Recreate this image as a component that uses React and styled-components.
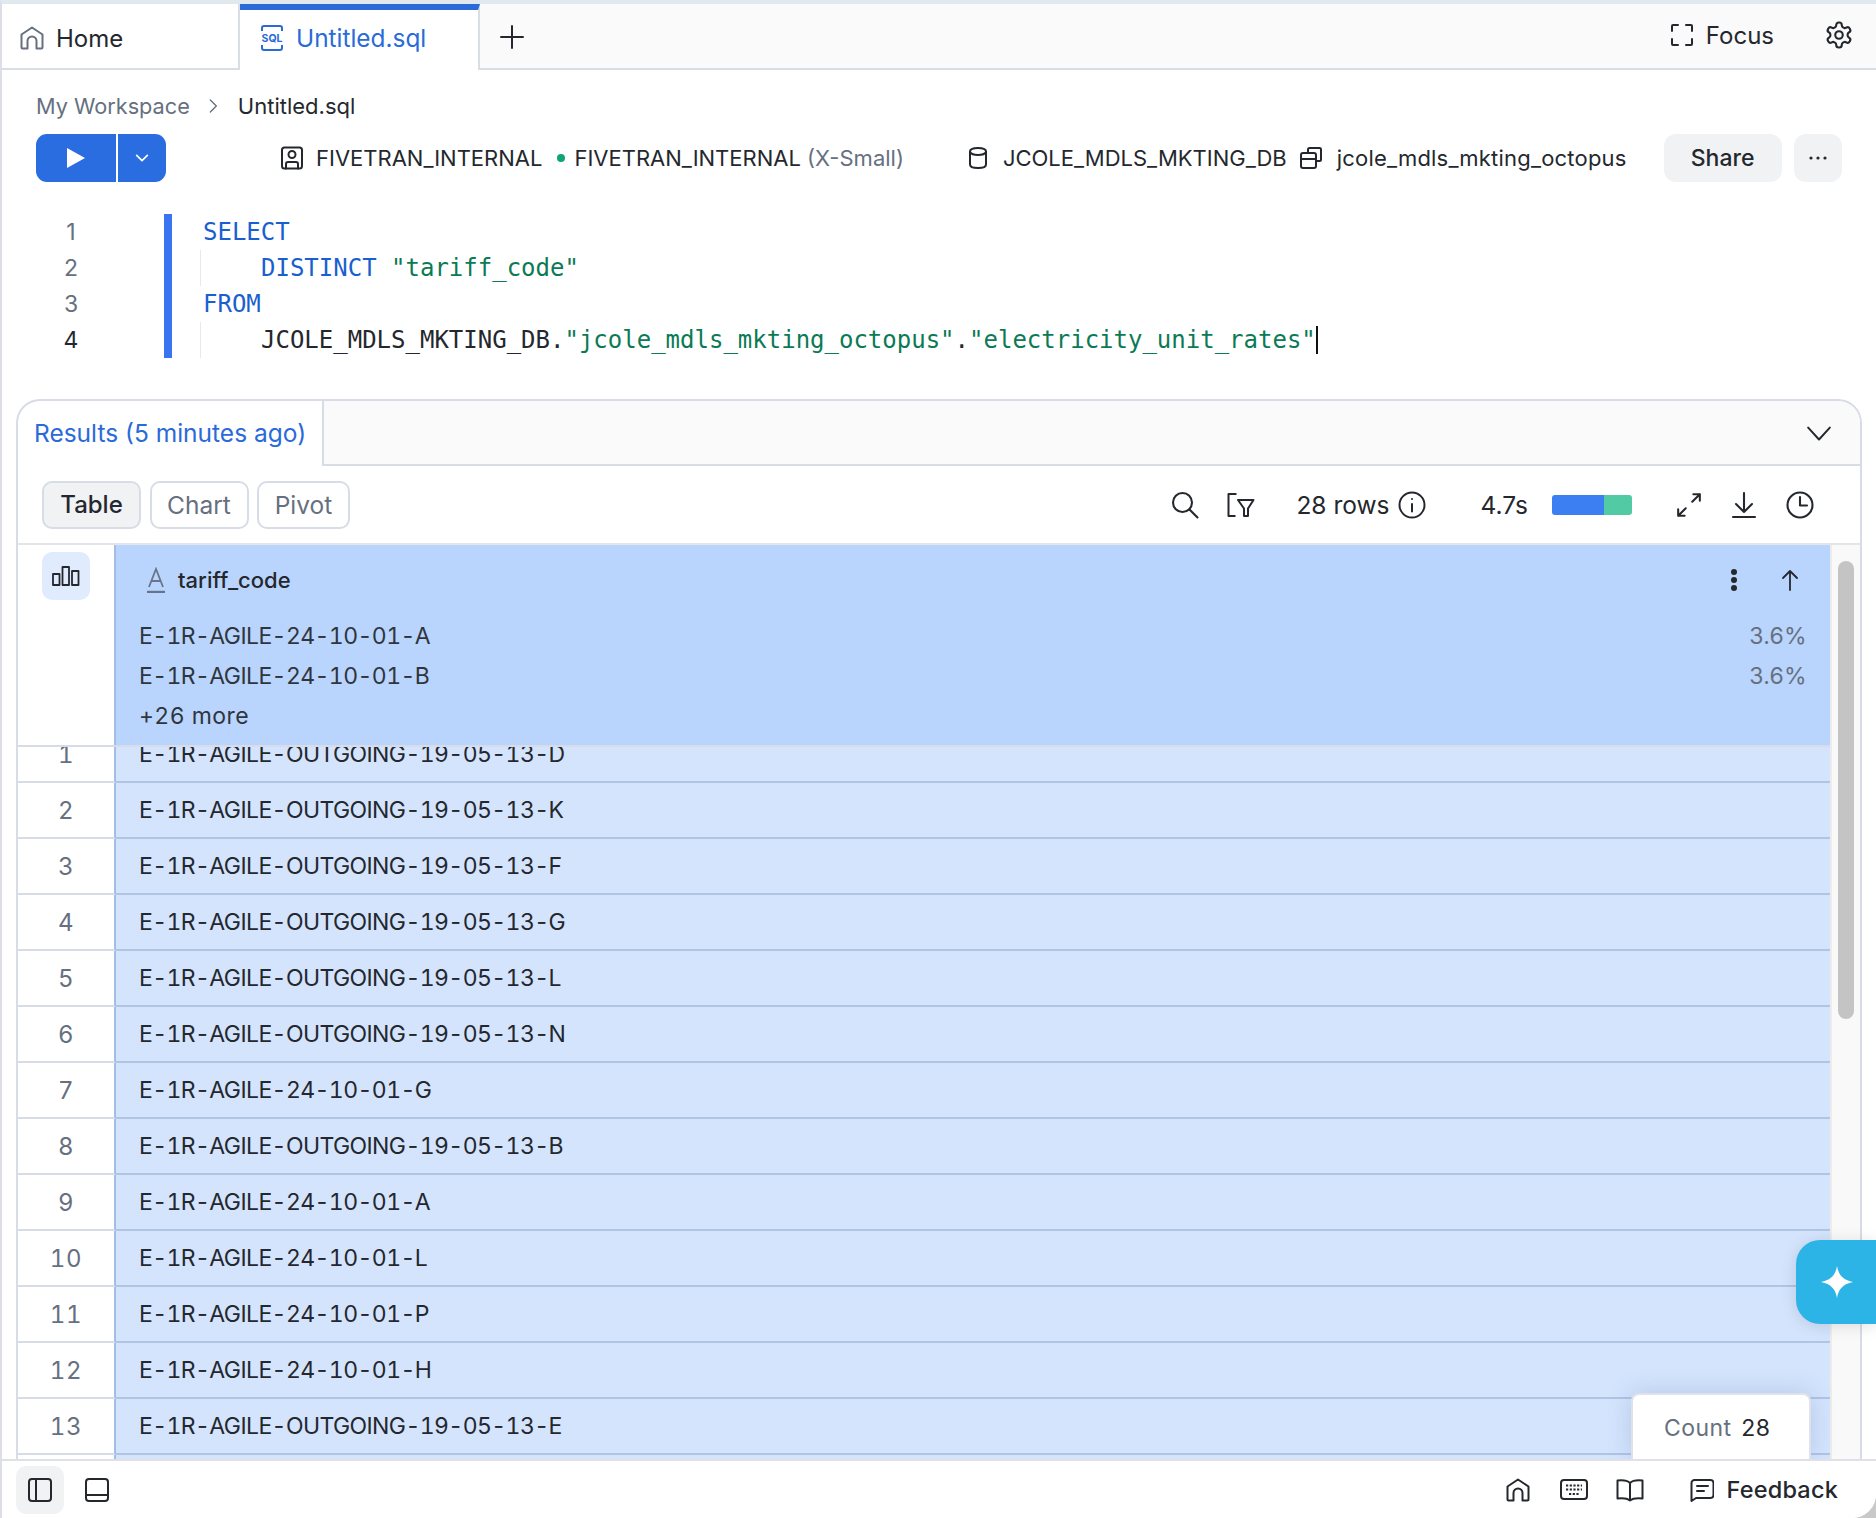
import React from "react";
import styled, { createGlobalStyle } from "styled-components";

const Global = createGlobalStyle`
  html, body { margin: 0; padding: 0; background: #c9c9c9; }
  body { font-family: Inter, "Liberation Sans", sans-serif; color: #24282e; }
  * { box-sizing: border-box; }
`;
const Frame = styled.div`
  position: relative; width: 1876px; height: 1518px; overflow: hidden; display: flex; flex-direction: column;
  background: #fff; border-top: 4px solid #e1e9ef; border-left: 2px solid #dcdfe5; border-bottom-right-radius: 24px;
`;
const TabBar = styled.div`
  display: flex; height: 66px; flex: none; background: #fafafa; border-bottom: 2px solid #d8dee6; align-items: stretch;
`;
const Tab = styled.div`
  display: flex; align-items: center; gap: 12px; height: ${p => (p.$active ? "66px" : "64px")}; background: #fff;
  width: ${p => (p.$active ? "240px" : "238px")}; font-size: ${p => (p.$active ? "24.4px" : "24px")}; padding-left: ${p => (p.$active ? "20px" : "18px")};
  padding-top: ${p => (p.$active ? "0" : "4px")}; padding-bottom: ${p => (p.$active ? "4px" : "0")};
  color: ${p => (p.$active ? "#2a6ad9" : "#24282e")};
  border-top: ${p => (p.$active ? "6px solid #2a6ad9" : "none")};
  border-right: 2px solid #d8dee6;
`;
const AddTab = styled.div` display: flex; align-items: center; padding: 0 0 0 20px; margin-top: 2px; `;
const Spacer = styled.div` flex: 1; `;
const FocusBtn = styled.div` display: flex; align-items: center; gap: 12px; font-size: 24px; margin: -2px 50px 0 0; `;
const Gear = styled.div` display: flex; align-items: center; margin: -2px 22px 0 0; `;
const Crumbs = styled.div` display: flex; align-items: center; height: 26px; margin: 23px 0 0 34px; font-size: 22px; `;
const CrumbMuted = styled.span` color: #667080; font-size: 21.7px; `;
const CrumbSep = styled.span` display: flex; margin: 0 17px 0 15px; `;
const ActionRow = styled.div` display: flex; align-items: center; height: 48px; margin: 15px 0 0 34px; `;
const RunGroup = styled.div` display: flex; width: 130px; height: 48px; border-radius: 11px; overflow: hidden; background: #2a6de0; `;
const RunMain = styled.div` width: 82px; display: flex; align-items: center; justify-content: center; border-right: 2px solid #fff; `;
const RunMore = styled.div` flex: 1; display: flex; align-items: center; justify-content: center; `;
const Meta = styled.div`
  display: flex; align-items: center; font-size: 22px; white-space: nowrap; margin-left: ${p => p.$ml}px; gap: ${p => p.$gap || 13}px;
  letter-spacing: ${p => p.$ls || 0}px;
`;
const Dot = styled.span` width: 8px; height: 8px; border-radius: 50%; background: #0ea47a; `;
const Muted = styled.span` color: #667080; `;
const GreyBtn = styled.div`
  height: 48px; display: flex; align-items: center; justify-content: center; background: #f1f2f4; border-radius: 12px;
  font-size: 23px; font-weight: 500; width: ${p => p.$w}px; margin-left: ${p => p.$ml}px;
`;
const Editor = styled.div`
  display: flex; height: 144px; margin-top: 32px; font-family: "DejaVu Sans Mono", monospace; font-size: 24px; line-height: 36px;
`;
const Gutter = styled.div` width: 170px; flex: none; border-right: 8px solid #3b74f0; `;
const LineNo = styled.div`
  width: 138px; text-align: center; font-family: Inter, sans-serif; font-size: 23px; color: ${p => (p.$cur ? "#24282e" : "#667080")};
`;
const Code = styled.div` padding-left: 28px; flex: 1; `;
const Line = styled.div` height: 36px; white-space: pre; position: relative; padding-left: ${p => (p.$indent ? "61px" : "3px")}; `;
const Guide = styled.span` position: absolute; left: 0; top: 0; bottom: 0; width: 1px; background: #e6e8ec; `;
const Kw = styled.span` color: #1a5fd0; `;
const Str = styled.span` color: #0b7a55; `;
const Caret = styled.span` display: inline-block; width: 2px; height: 28px; background: #111; vertical-align: -6px; `;
const Panel = styled.div`
  flex: 1; min-height: 0; margin: 41px 14px 0 14px; border: 2px solid #d8dce6; border-bottom: none;
  border-radius: 24px 24px 0 0; display: flex; flex-direction: column; overflow: hidden; background: #fff;
`;
const PanelHead = styled.div` display: flex; height: 65px; flex: none; `;
const ResultsTab = styled.div`
  width: 306px; flex: none; padding: 0 0 2px 16px; display: flex; align-items: center; font-size: 24.5px; color: #2a6ad9;
  border-right: 2px solid #d8dce6;
`;
const HeadFill = styled.div`
  flex: 1; background: #fafafa; border-bottom: 2px solid #d8dce6; display: flex; align-items: center; justify-content: flex-end; padding-right: 28px;
`;
const Tools = styled.div`
  display: flex; align-items: center; height: 79px; flex: none; padding: 0 46px 0 24px; border-bottom: 2px solid #e4e5e8;
`;
const ViewBtn = styled.div`
  height: 48px; width: ${p => p.$w}px; margin-right: 8.5px; display: flex; align-items: center; justify-content: center; border-radius: 10px;
  font-size: ${p => (p.$on ? 24 : 24.5)}px; border: 2px solid #d8dce6; background: ${p => (p.$on ? "#f1f2f4" : "#fff")}; color: ${p => (p.$on ? "#24282e" : "#667080")};
  font-weight: ${p => (p.$on ? 500 : 400)};
`;
const ToolText = styled.span` font-size: 24.5px; white-space: nowrap; margin-left: ${p => p.$ml || 0}px; `;
const ToolIcon = styled.span` display: flex; margin-left: ${p => p.$ml}px; `;
const TimeBar = styled.div` display: flex; width: 80px; height: 20px; border-radius: 3px; overflow: hidden; margin-left: 24px; `;
const TimeSeg = styled.span` background: ${p => p.$c}; flex: ${p => p.$f}; `;
const TableArea = styled.div` flex: 1; min-height: 0; display: flex; position: relative; `;
const Grid = styled.div` flex: 1; min-width: 0; display: flex; flex-direction: column; `;
const TableHead = styled.div` display: flex; height: 202px; flex: none; border-bottom: 2px solid #d8dce6; position: relative; z-index: 2; `;
const Corner = styled.div` width: 98px; flex: none; background: #fff; border-right: 2px solid #a4bde3; padding: 7px 0 0 24px; `;
const ChartBtn = styled.div` width: 48px; height: 48px; border-radius: 10px; background: #e0ecfe; display: flex; align-items: center; justify-content: center; `;
const HeadCell = styled.div` flex: 1; background: #b9d5fd; padding: 0 23px 0 23px; `;
const ColTitle = styled.div` display: flex; align-items: center; height: 60px; margin-top: 5px; padding-left: 7px; font-size: 22px; font-weight: 500; margin-bottom: 6px; `;
const ColName = styled.span` margin-left: 12px; flex: 1; `;
const ColAction = styled.span` display: flex; margin-left: ${p => p.$ml}px; margin-right: ${p => p.$mr || 0}px; `;
const Value = styled.div`
  display: flex; justify-content: space-between; height: 40px; align-items: center; font-size: 23px; color: #30353d;
  letter-spacing: ${p => (p.$more ? "0.45px" : "-0.6px")}; font-variant-numeric: tabular-nums;
`;
const Pct = styled.span` color: #667080; letter-spacing: 0.3px; font-variant-numeric: normal; `;
const Rows = styled.div` flex: 1; min-height: 0; overflow: hidden; `;
const RowList = styled.div` margin-top: -20px; `;
const Row = styled.div` display: flex; height: 56px; `;
const RowNo = styled.div`
  width: 98px; flex: none; display: flex; align-items: center; justify-content: center; background: #fff; color: #667080; font-size: 24px;
  letter-spacing: 0.6px; font-variant-numeric: tabular-nums; border-right: 2px solid #a4bde3; border-bottom: 2px solid #d8dce6;
`;
const RowCell = styled.div`
  flex: 1; display: flex; align-items: center; padding-left: 23px; background: #d4e4fd; border-bottom: 2px solid #b0c4e4; font-size: 23px;
  letter-spacing: -0.6px; font-variant-numeric: tabular-nums; color: #24282e;
`;
const Track = styled.div` width: 30px; flex: none; background: #f9f9f9; border-left: 2px solid #ececec; padding: 16px 6px 0 6px; `;
const Thumb = styled.div` width: 16px; height: 458px; border-radius: 8px; background: #c4c4c4; `;
const CountBox = styled.div`
  position: absolute; right: 49px; bottom: 0; width: 180px; height: 66px; background: #fff; border: 2px solid #dfe2ea; border-bottom: none;
  border-radius: 8px 8px 0 0; display: flex; align-items: center; gap: 10px; padding: 2px 0 0 31px; font-size: 23px; letter-spacing: .4px; box-shadow: 0 0 24px rgba(70,100,160,.22); z-index: 3;
`;
const Bottom = styled.div`
  height: 59px; flex: none; border-top: 2px solid #dfe1e7; display: flex; align-items: center; padding: 0 38px 0 14px; background: #fff;
`;
const SideBtn = styled.div`
  width: 48px; height: 48px; border-radius: 10px; background: ${p => (p.$on ? "#f1f2f4" : "transparent")}; display: flex; align-items: center; justify-content: center;
  margin-right: ${p => p.$mr || 0}px;
`;
const BottomIcon = styled.span` display: flex; margin-left: ${p => p.$ml}px; `;
const Feedback = styled.span` font-size: 23.5px; margin-left: 12px; font-weight: 500; letter-spacing: .2px; `;
const Sparkle = styled.div`
  position: absolute; right: 0; top: 1236px; width: 80px; height: 84px; background: #2db4e6; border-radius: 24px 0 0 24px;
  display: flex; align-items: center; padding-left: 25px; box-shadow: 0 2px 16px rgba(0,0,0,.12); z-index: 5;
`;

const S = ({ w = 24, h, vb, sw = 2, c = "#24282e", children }) => (
  <svg width={w} height={h || w} viewBox={vb || "0 0 24 24"} fill="none" stroke={c} strokeWidth={sw} strokeLinecap="round" strokeLinejoin="round">{children}</svg>
);
const HomeI = ({ c = "#667080" }) => (
  <S c={c}><path d="M1.500 21.500a1 1 0 0 0 1 1h5V15a4.500 4.500 0 0 1 9 0v7.500h5a1 1 0 0 0 1-1V8.500L12 1.500l-10.500 7v13Z" /></S>
);

const rows = [
  "E-1R-AGILE-OUTGOING-19-05-13-D", "E-1R-AGILE-OUTGOING-19-05-13-K", "E-1R-AGILE-OUTGOING-19-05-13-F",
  "E-1R-AGILE-OUTGOING-19-05-13-G", "E-1R-AGILE-OUTGOING-19-05-13-L", "E-1R-AGILE-OUTGOING-19-05-13-N",
  "E-1R-AGILE-24-10-01-G", "E-1R-AGILE-OUTGOING-19-05-13-B", "E-1R-AGILE-24-10-01-A", "E-1R-AGILE-24-10-01-L",
  "E-1R-AGILE-24-10-01-P", "E-1R-AGILE-24-10-01-H", "E-1R-AGILE-OUTGOING-19-05-13-E",
];

export default function App() {
  return (
    <Frame>
      <Global />
      <TabBar>
        <Tab>
          <HomeI />
          Home
        </Tab>
        <Tab $active>
          <svg width="24" height="26" viewBox="0 0 24 26" fill="none" stroke="#2a6ad9" strokeWidth="2">
            <path d="M2 6V3a2 2 0 0 1 2-2h16a2 2 0 0 1 2 2v3M2 20v3a2 2 0 0 0 2 2h16a2 2 0 0 0 2-2v-3" />
            <text x="12" y="17" textAnchor="middle" fontFamily="Inter" fontWeight="700" fontSize="10.5" fill="#2a6ad9" stroke="none">SQL</text>
          </svg>
          Untitled.sql
        </Tab>
        <AddTab><S sw={2}><path d="M12 1v22M1 12h22" /></S></AddTab>
        <Spacer />
        <FocusBtn>
          <S><path d="M8 2H3a1 1 0 0 0-1 1v5M16 2h5a1 1 0 0 1 1 1v5M8 22H3a1 1 0 0 1-1-1v-5M16 22h5a1 1 0 0 0 1-1v-5" /></S>
          Focus
        </FocusBtn>
        <Gear>
          <S w={30} sw={1.7}>
            <path d="M12.22 2h-.44a2 2 0 0 0-2 2v.18a2 2 0 0 1-1 1.73l-.43.25a2 2 0 0 1-2 0l-.15-.08a2 2 0 0 0-2.73.73l-.22.38a2 2 0 0 0 .73 2.73l.15.1a2 2 0 0 1 1 1.72v.51a2 2 0 0 1-1 1.74l-.15.09a2 2 0 0 0-.73 2.73l.22.38a2 2 0 0 0 2.73.73l.15-.08a2 2 0 0 1 2 0l.43.25a2 2 0 0 1 1 1.73V20a2 2 0 0 0 2 2h.44a2 2 0 0 0 2-2v-.18a2 2 0 0 1 1-1.73l.43-.25a2 2 0 0 1 2 0l.15.08a2 2 0 0 0 2.73-.73l.22-.39a2 2 0 0 0-.73-2.73l-.15-.08a2 2 0 0 1-1-1.74v-.5a2 2 0 0 1 1-1.74l.15-.09a2 2 0 0 0 .73-2.73l-.22-.38a2 2 0 0 0-2.73-.73l-.15.08a2 2 0 0 1-2 0l-.43-.25a2 2 0 0 1-1-1.73V4a2 2 0 0 0-2-2z" />
            <circle cx="12" cy="12" r="3" />
          </S>
        </Gear>
      </TabBar>
      <Crumbs>
        <CrumbMuted>My Workspace</CrumbMuted>
        <CrumbSep><S w={16} c="#667080"><path d="M8 3l9 9-9 9" /></S></CrumbSep>
        Untitled.sql
      </Crumbs>
      <ActionRow>
        <RunGroup>
          <RunMain><svg width="18" height="20" viewBox="0 0 18 20"><path d="M0 0l18 10L0 20Z" fill="#fff" /></svg></RunMain>
          <RunMore><S w={16} c="#fff" sw={2.6}><path d="M4 8l8 8 8-8" /></S></RunMore>
        </RunGroup>
        <Meta $ml={114} $gap={12}>
          <S><rect x="2" y="1.5" width="20" height="21" rx="2.5" /><circle cx="12" cy="8.5" r="3.5" /><path d="M6 22.5V18a2 2 0 0 1 2-2h8a2 2 0 0 1 2 2v4.5" /></S>
          FIVETRAN_INTERNAL
        </Meta>
        <Meta $ml={15} $gap={9}>
          <Dot />
          <span>FIVETRAN_INTERNAL <Muted>(X-Small)</Muted></span>
        </Meta>
        <Meta $ml={62}>
          <S><path d="M4 5.5C4 3 8 2 12 2s8 1 8 3.5v13C20 21 16 22 12 22s-8-1-8-3.5v-13Z" /><path d="M4 6c1 2 5 3 8 3s7-1 8-3" /></S>
          JCOLE_MDLS_MKTING_DB
        </Meta>
        <Meta $ml={12} $gap={14} $ls={0.2}>
          <S><path d="M9 7V3.500A1.500 1.500 0 0 1 10.500 2h10A1.500 1.500 0 0 1 22 3.500v10a1.500 1.500 0 0 1-1.500 1.500H17" /><rect x="2" y="7" width="15" height="15" rx="2" /><path d="M2 13h15" /></S>
          jcole_mdls_mkting_octopus
        </Meta>
        <GreyBtn $w={118} $ml={37}>Share</GreyBtn>
        <GreyBtn $w={48} $ml={12}>
          <svg width="20" height="6" viewBox="0 0 20 6" fill="#24282e"><circle cx="3" cy="3" r="1.600" /><circle cx="10" cy="3" r="1.600" /><circle cx="17" cy="3" r="1.600" /></svg>
        </GreyBtn>
      </ActionRow>
      <Editor>
        <Gutter>
          <LineNo>1</LineNo>
          <LineNo>2</LineNo>
          <LineNo>3</LineNo>
          <LineNo $cur>4</LineNo>
        </Gutter>
        <Code>
          <Line><Kw>SELECT</Kw></Line>
          <Line $indent><Guide /><Kw>DISTINCT</Kw> <Str>"tariff_code"</Str></Line>
          <Line><Kw>FROM</Kw></Line>
          <Line $indent><Guide />JCOLE_MDLS_MKTING_DB.<Str>"jcole_mdls_mkting_octopus"</Str>.<Str>"electricity_unit_rates"</Str><Caret /></Line>
        </Code>
      </Editor>
      <Panel>
        <PanelHead>
          <ResultsTab>Results (5 minutes ago)</ResultsTab>
          <HeadFill><S w={26} sw={1.8}><path d="M2 7l10 11L22 7" /></S></HeadFill>
        </PanelHead>
        <Tools>
          <ViewBtn $on $w={99}>Table</ViewBtn>
          <ViewBtn $w={99}>Chart</ViewBtn>
          <ViewBtn $w={93}>Pivot</ViewBtn>
          <Spacer />
          <ToolIcon $ml={0}><S w={28} vb="0 0 28 28" sw={2.1}><circle cx="11.500" cy="11.500" r="9.500" /><path d="M18.500 18.500l8 8" /></S></ToolIcon>
          <ToolIcon $ml={28}>
            <svg width="28" height="26" viewBox="0 0 28 26" fill="none" stroke="#24282e" strokeWidth="2" strokeLinejoin="round">
              <path d="M9.500 2H1.500v22h7M11 8h15.500L21 16.500V24h-4v-7.500L11 8Z" />
            </svg>
          </ToolIcon>
          <ToolText $ml={41}>28 rows</ToolText>
          <ToolIcon $ml={9}><S w={28} vb="0 0 28 28" sw={2}><circle cx="14" cy="14" r="12.500" /><path d="M14 13v7.500M14 8h.01" /></S></ToolIcon>
          <ToolText $ml={54}>4.7s</ToolText>
          <TimeBar><TimeSeg $c="#3b7ff2" $f={52} /><TimeSeg $c="#52cba5" $f={28} /></TimeBar>
          <ToolIcon $ml={44}><S w={26} sw={1.9}><path d="M15 9l7-7M16 2h6v6M9 15l-7 7M8 22H2v-6" /></S></ToolIcon>
          <ToolIcon $ml={28}><S w={28} vb="0 0 28 28" sw={2.1}><path d="M14 2v19M6 13l8 8 8-8M3 26h22" /></S></ToolIcon>
          <ToolIcon $ml={28}><S w={28} vb="0 0 28 28" sw={2.1}><circle cx="14" cy="14" r="12.500" /><path d="M14 6v8.500h7" /></S></ToolIcon>
        </Tools>
        <TableArea>
          <Grid>
            <TableHead>
              <Corner>
                <ChartBtn>
                  <S w={30} vb="0 0 30 24" sw={1.8}><rect x="2" y="10" width="6.500" height="11" /><rect x="11.500" y="3" width="6.500" height="18" /><rect x="21" y="7" width="6.500" height="14" /></S>
                </ChartBtn>
              </Corner>
              <HeadCell>
                <ColTitle>
                  <svg width="20" height="26" viewBox="0 0 20 26" fill="none" stroke="#69748a" strokeWidth="1.800"><path d="M3 20L10 2l7 18M5 14h10" /><path d="M1 25h18" strokeWidth="2.400" /></svg>
                  <ColName>tariff_code</ColName>
                  <ColAction $ml={0}><svg width="8" height="24" viewBox="0 0 8 24" fill="#24282e"><circle cx="4" cy="4" r="3" /><circle cx="4" cy="12" r="3" /><circle cx="4" cy="20" r="3" /></svg></ColAction>
                  <ColAction $ml={40} $mr={5}><S w={24} sw={1.8}><path d="M12 22V3M5 10l7-7 7 7" /></S></ColAction>
                </ColTitle>
                <Value>E-1R-AGILE-24-10-01-A<Pct>3.6%</Pct></Value>
                <Value>E-1R-AGILE-24-10-01-B<Pct>3.6%</Pct></Value>
                <Value $more>+26 more</Value>
              </HeadCell>
            </TableHead>
            <Rows>
              <RowList>
                {rows.map((r, i) => (
                  <Row key={i}>
                    <RowNo>{i + 1}</RowNo>
                    <RowCell>{r}</RowCell>
                  </Row>
                ))}
                <Row>
                  <RowNo />
                  <RowCell />
                </Row>
              </RowList>
            </Rows>
          </Grid>
          <Track><Thumb /></Track>
          <CountBox><Muted>Count</Muted> 28</CountBox>
        </TableArea>
      </Panel>
      <Bottom>
        <SideBtn $on $mr={21}>
          <S><rect x="1" y="1" width="22" height="22" rx="3" /><path d="M8 1v22" /></S>
        </SideBtn>
        <S><rect x="1" y="1" width="22" height="22" rx="3" /><path d="M1 17h22" /></S>
        <Spacer />
        <BottomIcon $ml={0}><HomeI c="#24282e" /></BottomIcon>
        <BottomIcon $ml={30}>
          <svg width="28" height="22" viewBox="0 0 28 22" fill="none" stroke="#24282e" strokeWidth="2"><rect x="1" y="1" width="26" height="19" rx="3" /><path d="M6 6.500h16M6 10.500h16M9 15h10" strokeDasharray="2.200 1.500" strokeWidth="2.200" /></svg>
        </BottomIcon>
        <BottomIcon $ml={28}>
          <svg width="28" height="24" viewBox="0 0 28 24" fill="none" stroke="#24282e" strokeWidth="2" strokeLinejoin="round"><path d="M14 5C11 2 6 2 1.500 2.500v18C6 20 11 20 14 22.500 17 20 22 20 26.500 20.500v-18C22 2 17 2 14 5ZM14 5v17.500" /></svg>
        </BottomIcon>
        <BottomIcon $ml={46}>
          <S><path d="M1.500 23V5a3 3 0 0 1 3-3h16a3 3 0 0 1 3 3v12a3 3 0 0 1-3 3H6l-4.500 3ZM7 8h11M7 13h7" /></S>
        </BottomIcon>
        <Feedback>Feedback</Feedback>
      </Bottom>
      <Sparkle>
        <svg width="32" height="32" viewBox="0 0 32 32"><path d="M16 0c1.500 9 6 14 16 16-10 2-14.500 7-16 16-1.500-9-6-14-16-16 10-2 14.500-7 16-16Z" fill="#fff" /></svg>
      </Sparkle>
    </Frame>
  );
}
